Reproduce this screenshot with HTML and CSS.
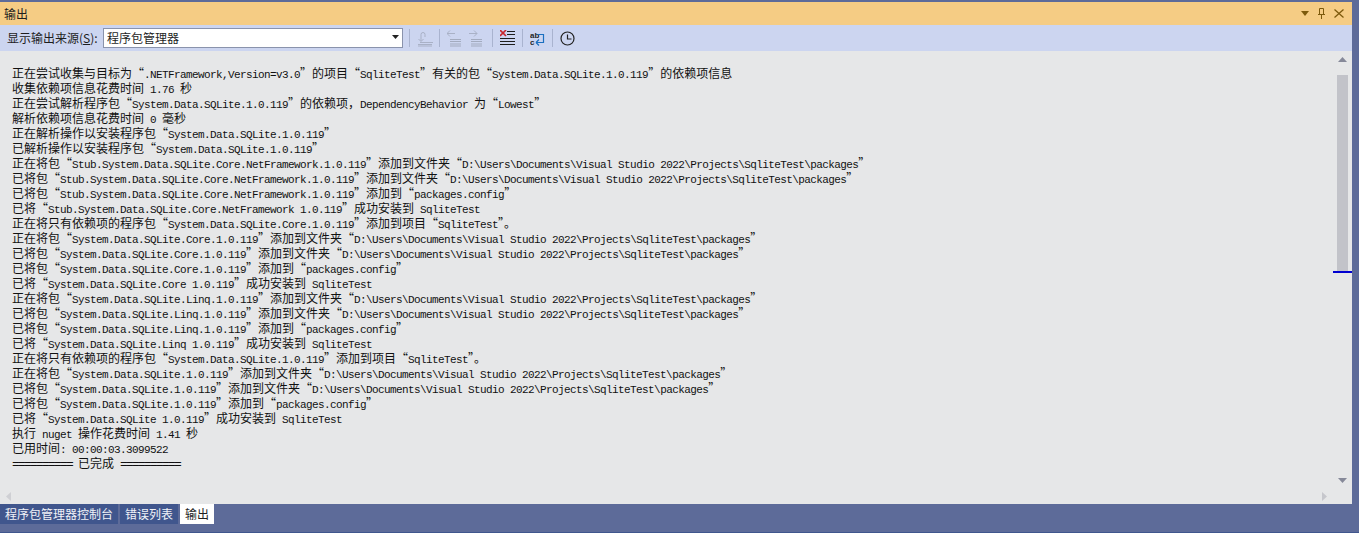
FILE: index.html
```html
<!DOCTYPE html>
<html lang="zh-CN">
<head>
<meta charset="utf-8">
<title>输出</title>
<link rel="stylesheet" href="styles.css">
</head>
<body>
<div class="panel">
  <header class="titlebar">
    <span class="title">输出</span>
    <div class="title-actions">
      <svg width="8" height="5" viewBox="0 0 8 5"><path d="M0 0h8L4 5z" fill="#7d5a0c"/></svg>
      <svg width="7" height="11" viewBox="0 0 7 11"><path d="M1.500 .5h4v6h-4zM0 6.500h7M3.500 7v4" fill="none" stroke="#7d5a0c"/></svg>
      <svg width="10" height="9" viewBox="0 0 10 9"><path d="M.5 .5l9 8M9.500 .5l-9 8" fill="none" stroke="#7d5a0c" stroke-width="1.300"/></svg>
    </div>
  </header>
  <div class="toolbar">
    <label class="source-label">显示输出来源(<u>S</u>):</label>
    <div class="select"><span>程序包管理器</span><svg width="7" height="4" viewBox="0 0 7 4"><path d="M0 0h7L3.500 4z" fill="#222"/></svg></div>
    <i class="sep"></i>
    <svg class="tool" width="16" height="18" viewBox="0 0 16 18"><path d="M3 13.500h13M1 15.500h14M1 17h14" fill="none" stroke="#a9b1c6"/><path d="M4 12V5.500a2 2 0 0 1 4 0V8M1.500 10L4 12.500 6.500 10" fill="none" stroke="#a9b1c6"/></svg>
    <i class="sep"></i>
    <svg class="tool" width="15" height="18" viewBox="0 0 15 18"><path d="M3 10.500h11M3 12.500h11M3 15h11M3 17h11" fill="none" stroke="#a3abbf"/><path d="M0 4.500h8M0 4.500l3-3M0 4.500l3 3" fill="none" stroke="#a9b1c6"/></svg>
    <svg class="tool tool-gap" width="15" height="18" viewBox="0 0 15 18"><path d="M2 10.500h11M2 12.500h11M2 15h11M2 17h11" fill="none" stroke="#a3abbf"/><path d="M0 4.500h8M8 4.500l-3-3M8 4.500l-3 3" fill="none" stroke="#a9b1c6"/></svg>
    <i class="sep"></i>
    <svg class="tool" width="16" height="16" viewBox="0 0 16 16"><path d="M0 0l6 6M6 0L0 6" stroke="#c8252c" stroke-width="1.600"/><path d="M7 1.500h8M7 4.500h8M0 8.500h15M0 11.500h15M0 14.500h15" stroke="#1e1e1e"/></svg>
    <i class="sep"></i>
    <svg class="tool" width="16" height="15" viewBox="0 0 16 15"><text x="0" y="7" class="ab">ab</text><text x="0" y="14" class="ab">c</text><path d="M7.500 3.500h6v8H6M6 11.500l3-3M6 11.500l3 3" fill="none" stroke="#1a6fc0" stroke-width="1.200"/></svg>
    <i class="sep"></i>
    <svg class="tool" width="15" height="15" viewBox="0 0 15 15"><circle cx="7.500" cy="7.500" r="6.500" fill="none" stroke="#222" stroke-width="1.200"/><path d="M7.500 3.500V8H11.500" fill="none" stroke="#222" stroke-width="1.200"/></svg>
  </div>
  <main class="output">
    <div class="log-area">
      <div class="log">
        <p>正在尝试收集与目标为“<b>.NETFramework,Version=v3.0</b>”的项目“<b>SqliteTest</b>”有关的包“<b>System.Data.SQLite.1.0.119</b>”的依赖项信息</p>
        <p>收集依赖项信息花费时间<b> 1.76 </b>秒</p>
        <p>正在尝试解析程序包“<b>System.Data.SQLite.1.0.119</b>”的依赖项，<b>DependencyBehavior </b>为“<b>Lowest</b>”</p>
        <p>解析依赖项信息花费时间<b> 0 </b>毫秒</p>
        <p>正在解析操作以安装程序包“<b>System.Data.SQLite.1.0.119</b>”</p>
        <p>已解析操作以安装程序包“<b>System.Data.SQLite.1.0.119</b>”</p>
        <p>正在将包“<b>Stub.System.Data.SQLite.Core.NetFramework.1.0.119</b>”添加到文件夹“<b>D:\Users\Documents\Visual Studio 2022\Projects\SqliteTest\packages</b>”</p>
        <p>已将包“<b>Stub.System.Data.SQLite.Core.NetFramework.1.0.119</b>”添加到文件夹“<b>D:\Users\Documents\Visual Studio 2022\Projects\SqliteTest\packages</b>”</p>
        <p>已将包“<b>Stub.System.Data.SQLite.Core.NetFramework.1.0.119</b>”添加到“<b>packages.config</b>”</p>
        <p>已将“<b>Stub.System.Data.SQLite.Core.NetFramework 1.0.119</b>”成功安装到<b> SqliteTest</b></p>
        <p>正在将只有依赖项的程序包“<b>System.Data.SQLite.Core.1.0.119</b>”添加到项目“<b>SqliteTest</b>”。</p>
        <p>正在将包“<b>System.Data.SQLite.Core.1.0.119</b>”添加到文件夹“<b>D:\Users\Documents\Visual Studio 2022\Projects\SqliteTest\packages</b>”</p>
        <p>已将包“<b>System.Data.SQLite.Core.1.0.119</b>”添加到文件夹“<b>D:\Users\Documents\Visual Studio 2022\Projects\SqliteTest\packages</b>”</p>
        <p>已将包“<b>System.Data.SQLite.Core.1.0.119</b>”添加到“<b>packages.config</b>”</p>
        <p>已将“<b>System.Data.SQLite.Core 1.0.119</b>”成功安装到<b> SqliteTest</b></p>
        <p>正在将包“<b>System.Data.SQLite.Linq.1.0.119</b>”添加到文件夹“<b>D:\Users\Documents\Visual Studio 2022\Projects\SqliteTest\packages</b>”</p>
        <p>已将包“<b>System.Data.SQLite.Linq.1.0.119</b>”添加到文件夹“<b>D:\Users\Documents\Visual Studio 2022\Projects\SqliteTest\packages</b>”</p>
        <p>已将包“<b>System.Data.SQLite.Linq.1.0.119</b>”添加到“<b>packages.config</b>”</p>
        <p>已将“<b>System.Data.SQLite.Linq 1.0.119</b>”成功安装到<b> SqliteTest</b></p>
        <p>正在将只有依赖项的程序包“<b>System.Data.SQLite.1.0.119</b>”添加到项目“<b>SqliteTest</b>”。</p>
        <p>正在将包“<b>System.Data.SQLite.1.0.119</b>”添加到文件夹“<b>D:\Users\Documents\Visual Studio 2022\Projects\SqliteTest\packages</b>”</p>
        <p>已将包“<b>System.Data.SQLite.1.0.119</b>”添加到文件夹“<b>D:\Users\Documents\Visual Studio 2022\Projects\SqliteTest\packages</b>”</p>
        <p>已将包“<b>System.Data.SQLite.1.0.119</b>”添加到“<b>packages.config</b>”</p>
        <p>已将“<b>System.Data.SQLite 1.0.119</b>”成功安装到<b> SqliteTest</b></p>
        <p>执行<b> nuget </b>操作花费时间<b> 1.41 </b>秒</p>
        <p>已用时间<b>: 00:00:03.3099522</b></p>
        <p><b class="rule">==========</b><b> </b>已完成<b> </b><b class="rule">==========</b></p>
      </div>
      <div class="hscroll">
        <svg width="5" height="9" viewBox="0 0 5 9"><path d="M5 0v9L0 4.500z" fill="#cfd0d4"/></svg>
        <svg width="5" height="9" viewBox="0 0 5 9"><path d="M0 0v9l5-4.500z" fill="#c6c7cc"/></svg>
      </div>
    </div>
    <div class="vscroll">
      <svg width="9" height="5" viewBox="0 0 9 5"><path d="M0 5h9L4.500 0z" fill="#868999"/></svg>
      <div class="thumb"></div>
      <div class="marker"></div>
      <div class="spacer"></div>
      <svg width="9" height="5" viewBox="0 0 9 5"><path d="M0 0h9L4.500 5z" fill="#868999"/></svg>
    </div>
  </main>
  <nav class="tabs">
    <span class="tab">程序包管理器控制台</span>
    <span class="tab">错误列表</span>
    <span class="tab active">输出</span>
  </nav>
</div>
</body>
</html>
```
FILE: styles.css
```css
* { box-sizing: border-box; }
html, body { margin: 0; height: 100%; overflow: hidden; }
body {
  background: #5d6b99;
  font-family: "Noto Sans CJK SC", "Liberation Sans", sans-serif;
  color: #1e1e1e;
}
.panel {
  height: 533px;
  padding: 2px 7px 0 0;
  display: flex;
  flex-direction: column;
  border-bottom: 1px solid #40568d;
}
.titlebar {
  height: 23px;
  flex: none;
  background: #f5cc84;
  display: flex;
  align-items: center;
  justify-content: space-between;
  padding: 0 8px 0 4px;
  font-size: 12px;
}
.title-actions { display: flex; align-items: center; gap: 9px; }
.toolbar {
  height: 26px;
  flex: none;
  background: #ccd5f0;
  display: flex;
  align-items: center;
  padding-left: 7px;
  font-size: 12px;
}
.source-label { width: 96px; white-space: nowrap; padding-bottom: 2px; }
.select {
  width: 300px;
  height: 20px;
  background: #fff;
  border: 1px solid #8a93ac;
  display: flex;
  align-items: center;
  justify-content: space-between;
  padding: 0 3px 2px 3px;
}
.sep { width: 1px; height: 18px; background: #a9b3cf; margin: 0 7px 0 6px; flex: none; }
.tool { flex: none; }
.tool + .tool { margin-left: 7px; }
.tool-gap { margin-right: 2px; }
.ab { font: 700 8px "Liberation Sans", sans-serif; fill: #1e1e1e; }
.output { height: 453px; flex: none; background: #e6e7e8; display: flex; }
.log-area { flex: 1; display: flex; flex-direction: column; min-width: 0; }
.log { flex: 1; padding: 14px 0 0 12px; font-size: 12px; color: #111; }
.log p {
  margin: 0;
  height: 15px;
  line-height: 15px;
  white-space: pre;
  font-variant-east-asian: full-width;
}
.log b {
  font: 400 11px/15px "Liberation Mono", monospace;
  letter-spacing: -0.6px;
}
.log b.rule {
  font-size: 13px;
  letter-spacing: -1.8px;
}
.hscroll {
  height: 13px;
  flex: none;
  margin-bottom: 1px;
  display: flex;
  justify-content: space-between;
  align-items: center;
  padding: 0 6px;
}
.vscroll { width: 19px; flex: none; display: flex; flex-direction: column; align-items: center; padding: 6px 0 21px; }
.vscroll svg { flex: none; }
.thumb { width: 11px; height: 196px; margin-top: 13px; background: #c2c3c9; flex: none; }
.marker { width: 100%; height: 2px; background: #0000d0; flex: none; }
.spacer { flex: 1; }
.tabs { display: flex; gap: 2px; height: 20px; flex: none; font-size: 12px; }
.tab { background: #40568d; color: #f0f2f8; padding: 0 5px; line-height: 20px; }
.tab.active { background: #fff; color: #1e1e1e; }
```
